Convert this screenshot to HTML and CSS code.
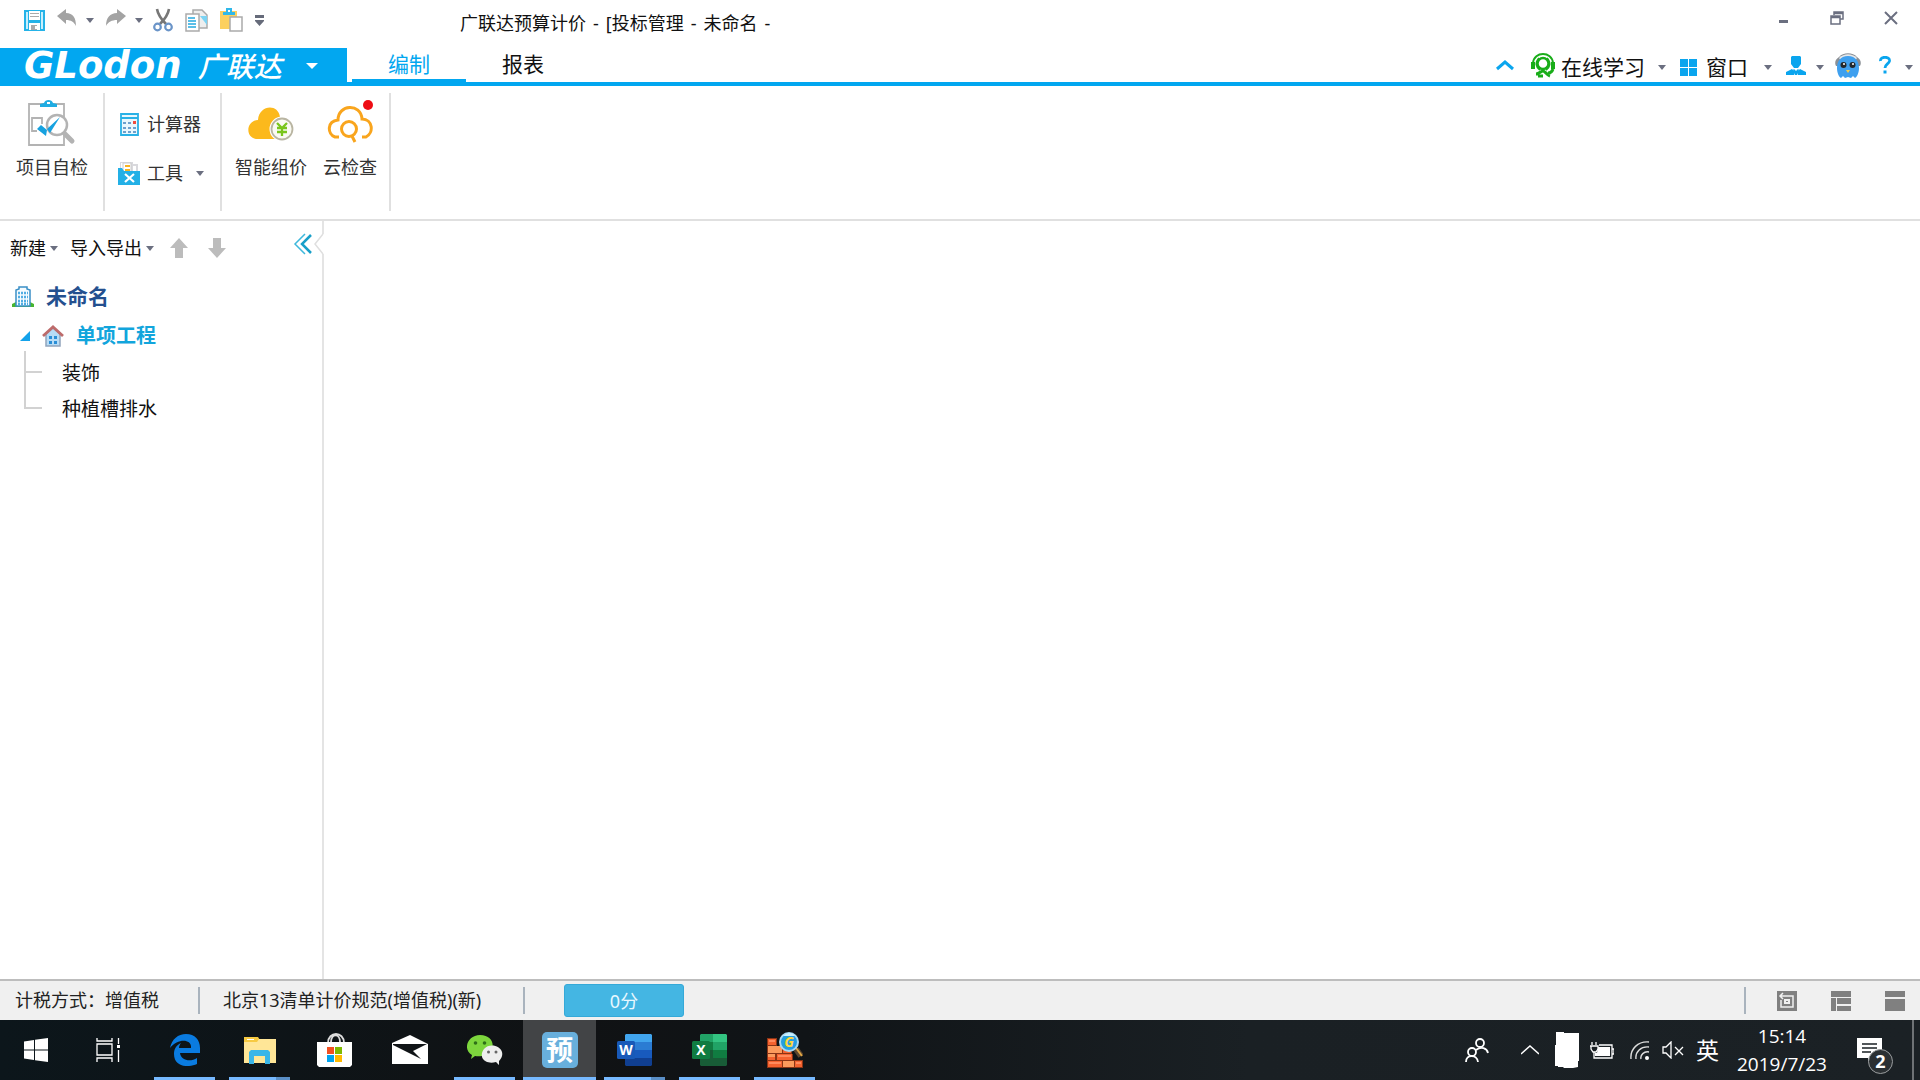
FILE: index.html
```
<!DOCTYPE html>
<html lang="zh-CN">
<head>
<meta charset="utf-8">
<title>广联达预算计价</title>
<link rel="stylesheet" href="styles.css">
</head>
<body>
<div class="app">
  <header class="titlebar">
    <div class="quick">
      <button class="quick-btn" aria-label="保存"><svg width="21" height="21" viewBox="0 0 21 21"><path fill="#25b3e8" d="M0 0h21v21H0z"/><path fill="#c9effc" d="M2 2h2v17H2zM17 2h2v17h-2z"/><path fill="#fff" d="M5 1h11v9H5zM5 13h11v7H5z"/><path fill="#aaa" d="M6 3h9v1H6zM6 6h9v1H6zM7 15h6v5H7z"/><path fill="#fff" d="M11 16h2v3h-2z"/></svg></button>
      <button class="quick-btn split" aria-label="撤销"><svg width="20" height="22" viewBox="0 0 20 22"><path fill="#a3a3a3" d="M0 7 9 0v4c7 0 10 5 10 13-2-4-5-6-10-6v4z"/></svg><i class="caret"></i></button>
      <button class="quick-btn split" aria-label="重做"><svg width="20" height="22" viewBox="0 0 20 22"><path fill="#a3a3a3" d="M20 7 11 0v4C4 4 0 9 0 17c2-4 6-6 11-6v4z"/></svg><i class="caret"></i></button>
      <button class="quick-btn" aria-label="剪切"><svg width="20" height="24" viewBox="0 0 20 24"><path fill="none" stroke="#777" stroke-width="2.6" d="M4 1c1 6 4 10 9 15M16 1c-1 6-4 10-9 15"/><g fill="#fff" stroke="#6a94c8" stroke-width="2.2"><circle cx="4.500" cy="19" r="3.300"/><circle cx="15.500" cy="19" r="3.300"/></g></svg></button>
      <button class="quick-btn" aria-label="复制"><svg width="23" height="23" viewBox="0 0 23 23"><path fill="#eee" stroke="#aaa" stroke-width="1.500" d="M8 1h9l5 5v13H8z"/><path fill="#7cd3f3" d="M15 7h7v9z"/><path fill="#fff" stroke="#aaa" stroke-width="1.500" d="M1 5h13v17H1z"/><path stroke="#25a9e0" stroke-width="1.500" d="M3 9h7M3 12h8M3 15h8M3 18h8"/></svg></button>
      <button class="quick-btn" aria-label="粘贴"><svg width="23" height="24" viewBox="0 0 23 24"><path fill="#fcd05f" d="M0 3h17v18H0z"/><path fill="#2fb8ea" d="M3 7V4h3V0h6v4h3v3z"/><path fill="#fff" d="M8 2h2v2H8z"/><path fill="#fff" stroke="#aaa" stroke-width="1.500" d="M10 9h12v14H10z"/></svg></button>
      <button class="quick-btn" aria-label="更多"><svg width="9" height="11" viewBox="0 0 9 11"><path fill="#666b7a" d="M0 0h9v3H0zM0 5h9v1L4.500 11 0 6z"/></svg></button>
    </div>
    <h1 class="doc-title"><span>广联达预算计价</span><span>-</span><span>[投标管理</span><span>-</span><span>未命名</span><span>-</span></h1>
    <div class="win-controls">
      <button aria-label="最小化"><svg width="14" height="14" viewBox="0 0 14 14"><path fill="#6b6f80" d="M3 9h9v3H3z"/></svg></button>
      <button aria-label="还原"><svg width="14" height="14" viewBox="0 0 14 14"><path fill="none" stroke="#6b6f80" stroke-width="1.500" d="M4 4V1h9v7h-3M1 5h9v8H1zM1 6.500h9M4 2.500h9"/></svg></button>
      <button aria-label="关闭"><svg width="14" height="14" viewBox="0 0 14 14"><path fill="none" stroke="#6b6f80" stroke-width="2" d="m1 1 12 12M13 1 1 13"/></svg></button>
    </div>
  </header>

  <nav class="menubar">
    <button class="brand"><span class="brand-en">GLodon</span><span class="brand-cn">广联达</span><i class="caret caret-light"></i></button>
    <button class="tab tab-active">编制</button>
    <button class="tab">报表</button>
    <div class="menu-tools">
      <button class="tool" aria-label="收起功能区"><svg width="18" height="14" viewBox="0 0 18 14"><path fill="none" stroke="#0aa5ee" stroke-width="3" d="m1 9 8-7 8 7"/></svg></button>
      <button class="tool tool-learn"><svg width="24" height="28" viewBox="0 0 24 28"><g fill="none" stroke="#19ad19"><path stroke-width="2" d="M2 10C3-2 21-2 22 10"/><path stroke-width="4" d="M2 9v7M22 9v7"/><circle cx="12" cy="10.500" r="5.500" stroke-width="2.500"/><path stroke-width="2" d="M8 5c-4 5-3 9 1 12M16 5c4 5 3 9-1 12"/><path stroke-width="3" d="M5 21c3 0 5-3 7-3s4 4 7 5M22 16c-1 3-3 4-5 4M7 23h5"/></g></svg><span>在线学习</span><i class="caret"></i></button>
      <button class="tool tool-window"><svg width="17" height="17" viewBox="0 0 17 17"><path fill="#0aa5ee" d="M0 0h8v8H0zM9 0h8v8H9zM0 9h8v8H0zM9 9h8v8H9z"/></svg><span>窗口</span><i class="caret"></i></button>
      <button class="tool tool-user" aria-label="用户"><svg width="20" height="23" viewBox="0 0 20 23"><path fill="#0aa5ee" d="M6 0h8l1 1v7l-3 4H8L5 8V1zM0 19v-3l6-3 3 3-1 3zM20 19v-3l-6-3-3 3 1 3z"/><path fill="#0aa5ee" d="m8 13 2 2 2-2 1 1-2 5H9l-2-5z"/></svg><i class="caret"></i></button>
      <button class="tool" aria-label="助手"><svg width="26" height="29" viewBox="0 0 26 29"><path fill="#8b9096" d="M1 13C-1 9 1 6 4 4c4-5 14-5 18 0 3 2 5 5 3 9z"/><path fill="#e4e7ea" d="M4 5c5-5 13-5 18 0l-2 3H6z"/><path fill="#3fa0ef" d="M13 3c8 0 11 6 11 12 0 5-2 9-4 10l-2-2-2 2-3-1-3 1-2-2-2 2c-2-1-4-5-4-10C2 9 5 3 13 3z"/><circle cx="8.500" cy="12" r="3" fill="#23282d"/><circle cx="17.500" cy="12" r="3" fill="#23282d"/><circle cx="9" cy="11" r="1" fill="#fff"/><circle cx="18" cy="11" r="1" fill="#fff"/><path fill="#f6cc4c" d="m11 17 2 3 2-3z"/></svg></button>
      <button class="tool tool-help" aria-label="帮助"><svg width="12" height="22" viewBox="0 0 12 22"><path fill="none" stroke="#0aa5ee" stroke-width="2.800" d="M1.500 5C1 0 11 0 10.500 5 10 8 6 8 6 12"/><path fill="#0aa5ee" d="M4.500 14.500h3v3h-3z"/></svg><i class="caret"></i></button>
    </div>
  </nav>

  <section class="ribbon">
    <div class="ribbon-group">
      <button class="big-btn"><svg width="48" height="46" viewBox="0 0 48 46"><path fill="#fff" stroke="#b3b3b3" stroke-width="1.800" d="M1 4h35v41H1z"/><path fill="#20ace2" d="M12 7V4l4-1c1-4 8-4 9 0l4 1v3z"/><path fill="#fff" d="M19 2h3v2h-3z"/><path fill="none" stroke="#b3b3b3" stroke-width="1.800" d="M14 24v-6H4v13h5"/><circle cx="29" cy="25" r="10" fill="#fff" stroke="#b3b3b3" stroke-width="2.500"/><path stroke="#b3b3b3" stroke-width="5" stroke-linecap="round" d="m37 34 7 7"/><path fill="#17a2e0" d="m9 29 4-4 6 5-1 6zM19 29 32 17 22 33z"/></svg><span>项目自检</span></button>
    </div>
    <div class="ribbon-group ribbon-stack">
      <button class="small-btn"><svg width="22" height="23" viewBox="0 0 22 23"><path fill="#e9f7fd" stroke="#28b1e6" stroke-width="1.800" d="M3 1h17v21H3z"/><path fill="#28b1e6" d="M3 4h17v2H3z"/><path stroke="#4384bd" stroke-width="1.500" stroke-dasharray="3 2" d="M5 10h13M5 15h13M5 19h13"/><path fill="#f04e3e" d="M15 8h3v3h-3z"/></svg><span>计算器</span></button>
      <button class="small-btn"><svg width="22" height="23" viewBox="0 0 22 23"><path fill="#d9d9dd" d="M2 0h13v2h5v8H2z"/><path fill="#fff" d="M3 1h2v8H3zM15 4h3v5h-3z"/><path fill="#fff" stroke="#ccc" d="M5 1h8v9H5z"/><path stroke="#f8b420" stroke-width="2" d="M7 4h5M7 8h5"/><path fill="#23b0e6" d="M0 6h4l2 3h16v14H0z"/><path stroke="#fff" stroke-width="2.200" d="m7 12 9 8M16 12l-9 8"/></svg><span>工具</span><i class="caret"></i></button>
    </div>
    <div class="ribbon-group ribbon-cloud">
      <button class="big-btn"><svg width="46" height="46" viewBox="0 0 46 46"><path fill="#fcb91c" d="M8 39C-3 37-2 21 10 20 11 5 30 3 32 17c8 1 11 7 9 13-2 6-5 9-10 9z"/><circle cx="34" cy="29" r="11" fill="#f5f3e9" stroke="#fff" stroke-width="3"/><circle cx="34" cy="29" r="10.500" fill="#fafaf2" stroke="#b9b5a2" stroke-width="1.800"/><path fill="none" stroke="#7ac51c" stroke-width="2.300" d="m29 23 5 5 5-5M34 28v8M29 28h10M29 32h10"/></svg><span>智能组价</span></button>
      <button class="big-btn"><svg width="46" height="46" viewBox="0 0 46 46"><path fill="none" stroke="#f9a51d" stroke-width="3" d="M12 37H8c-8-3-8-16 3-17C11 4 34 3 35 19c11 0 12 14 4 18h-4"/><circle cx="22" cy="29" r="7.500" fill="none" stroke="#f9a51d" stroke-width="3"/><path stroke="#f9a51d" stroke-width="3" d="m25 36 3 6"/><circle cx="41" cy="5" r="5" fill="#ee0d14"/></svg><span>云检查</span></button>
    </div>
  </section>

  <main class="workspace">
    <aside class="sidebar">
      <div class="side-tools">
        <button>新建<i class="caret"></i></button>
        <button>导入导出<i class="caret"></i></button>
        <button class="move" aria-label="上移"><svg width="18" height="20" viewBox="0 0 18 20"><path fill="#bcbcbc" d="m9 0 9 10h-5v10H5V10H0z"/></svg></button>
        <button class="move" aria-label="下移"><svg width="18" height="20" viewBox="0 0 18 20"><path fill="#bcbcbc" d="m9 20 9-10h-5V0H5v10H0z"/></svg></button>
      </div>
      <button class="collapse" aria-label="收起"><svg width="32" height="32" viewBox="0 0 32 32"><path fill="#fff" d="M22 16 31 6h1v20h-1z"/><path fill="none" stroke="#dfdfdf" stroke-width="1.500" d="m31 6-8 10 8 10"/><path fill="none" stroke="#3eb8dc" stroke-width="1.500" d="m13 6-10 10 10 10"/><path fill="none" stroke="#189fc9" stroke-width="2.500" d="m19 7-9 9 9 9"/></svg></button>
      <ul class="tree">
        <li>
          <a class="node root" href="#"><svg width="22" height="21" viewBox="0 0 22 21"><path fill="#48b52f" d="M0 21v-3l4-2h14l4 2v3z"/><path fill="#f6fcff" stroke="#3a8fc6" stroke-width="1.500" d="M4 20V4l3-1V1h8v2l3 1v16z"/><path stroke="#51ade3" stroke-width="2.500" stroke-dasharray="2 1" d="M6 7h10M6 11h10M6 15h10M6 18h10"/></svg>未命名</a>
          <ul>
            <li>
              <a class="node group" href="#"><svg width="10" height="10" viewBox="0 0 10 10"><path fill="#14a2ea" d="M10 0v10H0z"/></svg><svg width="22" height="22" viewBox="0 0 22 22"><path fill="#b7dcf6" stroke="#91a4bc" stroke-width="1.500" d="M4 9 11 3l7 6v12H4z"/><path fill="none" stroke="#bd6b6b" stroke-width="2.800" d="M1 11 11 2l10 9"/><path fill="#2a8ed6" d="M7 11h3v3H7zM12 11h3v3h-3zM7 16h3v3H7zM12 16h3v3h-3z"/></svg>单项工程</a>
              <ul class="leaves">
                <li><a href="#">装饰</a></li>
                <li><a href="#">种植槽排水</a></li>
              </ul>
            </li>
          </ul>
        </li>
      </ul>
    </aside>
    <div class="canvas"></div>
  </main>

  <footer class="statusbar">
    <div class="status-item tax">计税方式：增值税</div>
    <div class="status-item norm">北京13清单计价规范(增值税)(新)</div>
    <button class="score">0分</button>
    <div class="views">
      <button aria-label="视图一"><svg width="20" height="20" viewBox="0 0 20 20"><path fill="#808080" d="M0 0h20v20H0z"/><path fill="none" stroke="#f0f0f0" stroke-width="1.500" d="M3 5h13v11H4V9M6 2 3 5l3 3"/><path fill="none" stroke="#f0f0f0" stroke-width="2" d="M8 9h4v3H8z"/></svg></button>
      <button aria-label="视图二"><svg width="20" height="20" viewBox="0 0 20 20"><path fill="#808080" d="M0 0h20v6H0zM0 7h5v13H0zM6 7h14v6H6zM6 15h14v5H6z"/></svg></button>
      <button aria-label="视图三"><svg width="20" height="20" viewBox="0 0 20 20"><path fill="#808080" d="M0 0h20v6H0zM0 8h20v12H0z"/></svg></button>
    </div>
  </footer>
</div>

<footer class="taskbar">
  <button class="sys" aria-label="开始"><svg width="24" height="24" viewBox="0 0 24 24"><path fill="#fff" d="M0 3.500 10 2v9.500H0zM11 1.800 24 0v11.500H11zM0 12.500h10V22L0 20.500zM11 12.500h13V24l-13-1.800z"/></svg></button>
  <button class="sys" aria-label="任务视图"><svg width="25" height="24" viewBox="0 0 25 24"><path fill="none" stroke="#fff" stroke-width="1.300" d="M1 6h15v11H1zM1 0v3h15V0M1 24v-4h15v4M22.500 0v6M22.500 12v12"/><path fill="#fff" d="M21 7h3v3h-3z"/></svg></button>
  <div class="apps">
    <button class="app-btn open" aria-label="Edge"><svg width="30" height="32" viewBox="0 0 30 32"><path fill="#0a7be0" d="M0 14C2 5 8 0 16 0c9 0 14 6 14 14v5H10c1 8 11 9 17 5v6C18 34 4 33 4 20c0-6 3-9 7-11-1 1-2 3-2 5h12C22 5 8 4 0 14z"/></svg></button>
    <button class="app-btn open multi" aria-label="文件资源管理器"><svg width="32" height="27" viewBox="0 0 32 27"><path fill="#f7ca42" d="M0 0h14l2 3h16v7H0z"/><path fill="#ffe697" d="M0 5h13l2-3h17v24H0z"/><path fill="#fff" d="M3 2h7v1H3z"/><path fill="#3ab6e8" d="M5 27V15l2-2h17l2 2v12h-5v-8H10v8z"/></svg></button>
    <button class="app-btn" aria-label="应用商店"><svg width="35" height="34" viewBox="0 0 35 34"><path fill="none" stroke="#ddd" stroke-width="1.800" d="M11 10C11-2 27-2 27 10M14 9c0-9 9-9 9 0"/><path fill="#fff" d="M0 9h35v23l-2 2H2l-2-2z"/><path fill="#f25022" d="M10 14h7v7h-7z"/><path fill="#7fba00" d="M18 14h7v7h-7z"/><path fill="#00a4ef" d="M10 22h7v7h-7z"/><path fill="#ffb900" d="M18 22h7v7h-7z"/></svg></button>
    <button class="app-btn" aria-label="邮件"><svg width="36" height="30" viewBox="0 0 36 30"><path fill="#fff" d="M0 8 18 0l18 9v20H0z"/><path fill="#101417" d="M1 9h34l-14 7 8 8L1 10z"/></svg></button>
    <button class="app-btn open" aria-label="微信"><svg width="36" height="30" viewBox="0 0 36 30"><path fill="#7dd63d" d="m4 24 1-4C-5 14 1 0 13 0c12 0 15 10 11 15-4 6-11 7-16 6z"/><path fill="#eee" d="M29 27C18 30 11 22 17 14c5-6 16-4 18 3 1 4-1 7-3 9v4z"/><g fill="#2f7019"><circle cx="8.500" cy="8" r="1.800"/><circle cx="17.500" cy="8" r="1.800"/></g><g fill="#666"><circle cx="21.500" cy="17" r="1.500"/><circle cx="29" cy="17" r="1.500"/></g></svg></button>
    <button class="app-btn open current"><span class="yu">预</span></button>
    <button class="app-btn open multi" aria-label="Word"><svg width="36" height="32" viewBox="0 0 36 32"><path fill="#41a5ee" d="M9 0h25l1 1v7H8V1z"/><path fill="#2b7cd3" d="M8 8h27v8H8z"/><path fill="#185abd" d="M8 16h27v8H8z"/><path fill="#103f91" d="M8 24h27v7l-1 1H9l-1-1z"/><rect y="7" width="18" height="18" rx="1.500" fill="#1859b8"/><text x="9" y="21" class="office-letter">W</text></svg></button>
    <button class="app-btn open" aria-label="Excel"><svg width="36" height="32" viewBox="0 0 36 32"><path fill="#21a366" d="M9 0h13v16H8V1z"/><path fill="#33c481" d="M21 0h13l1 1v7H21z"/><path fill="#21a366" d="M21 8h14v8H21z"/><path fill="#107c41" d="M8 8h13v8H8zM21 16h14v8H21z"/><path fill="#185c37" d="M8 16h13v8h14v7l-1 1H9l-1-1z"/><rect y="7" width="18" height="18" rx="1.500" fill="#107c41"/><text x="9" y="21" class="office-letter">X</text></svg></button>
    <button class="app-btn open" aria-label="广联达工具"><svg width="36" height="36" viewBox="0 0 36 36"><path fill="#8a3416" d="M0 6h10v8h15v8h1v6h10v8H0z"/><path fill="#f4622f" d="M1 7h8v6H1zM1 22h7v6H1zM10 22h15v6H10zM1 29h14v6H1z"/><path fill="#fb9a5c" d="M1 14h14v7H1zM16 29h11v6H16zM1 22h7v3H1z"/><path fill="#f4622f" d="M16 15h8v6h-8zM28 29h7v6h-7z"/><path fill="#ff8a5c" d="M2 8h6v2H2zM11 23h13v2H11zM2 30h12v2H2zM29 30h5v2h-5z"/><path stroke="#5b4630" stroke-width="6" d="m29 17 5 7"/><path stroke="#e0a543" stroke-width="2" d="m29 16 6 8"/><circle cx="22" cy="10" r="9" fill="#249fdf" stroke="#a9d8f1" stroke-width="2"/><path fill="#c8efff" d="M16 4c4-4 9-4 12 0z"/><text x="22" y="15" class="g-letter">G</text></svg></button>
  </div>
  <div class="tray">
    <button class="people" aria-label="人脉"><svg width="24" height="24" viewBox="0 0 24 24"><g fill="none" stroke="#fff" stroke-width="1.800"><circle cx="15" cy="5" r="4"/><circle cx="7" cy="14" r="4"/><path d="M1 24c0-8 11-8 12 0M11 12c5-4 11-2 12 3"/></g></svg></button>
    <button class="tray-up" aria-label="显示隐藏的图标"><svg width="18" height="10" viewBox="0 0 18 10"><path fill="none" stroke="#fff" stroke-width="1.500" d="m0 9 9-8 9 8"/></svg></button>
    <svg width="24" height="36" viewBox="0 0 24 36"><path fill="#fff" d="M1 0h8v1h15v28h-1v6l-5 1H9l-1-1H3v-1H0V13h1z"/></svg>
    <svg class="battery" width="24" height="17" viewBox="0 0 24 17"><path fill="#fff" d="M8 5h12v9H5v-3h2z"/><path fill="none" stroke="#fff" stroke-width="1.300" d="M9 3h13v13H4v-5M22 7h2v5h-2M2 0v3M6 0v3M0 4h8v3l-2 3H3L1 7V4M4 10v6"/></svg>
    <svg class="wifi" width="20" height="19" viewBox="0 0 20 19"><g fill="none" stroke="#ddd" stroke-width="1.400"><path d="M1 18C0 8 8 0 19 1M6 18C5 11 11 5 19 6M11 18c-1-4 3-8 8-7"/></g><circle cx="17" cy="17" r="2" fill="#fff"/></svg>
    <svg class="volume" width="22" height="18" viewBox="0 0 22 18"><path fill="none" stroke="#fff" stroke-width="1.300" d="M1 6h3l5-5v16l-5-5H1zM13 6l8 8M21 6l-8 8"/></svg>
    <button class="ime">英</button>
    <time class="clock"><span>15:14</span><span>2019/7/23</span></time>
    <button class="notice" aria-label="通知"><svg width="38" height="38" viewBox="0 0 38 38"><path fill="#fff" d="M0 0h25v20H14l-3 4v-4H0z"/><path stroke="#1a2024" stroke-width="1.500" d="M5 6h15M5 10h15M5 14h9"/></svg><span class="badge">2</span></button>
    <button class="desktop" aria-label="显示桌面"></button>
  </div>
</footer>
</body>
</html>
```
FILE: styles.css
```
* { box-sizing: border-box; }

body {
  margin: 0;
  min-height: 100vh;
  display: flex;
  flex-direction: column;
  background: #fff;
  color: #111;
  font: 18px/24px "Noto Sans", "Noto Sans CJK SC", sans-serif;
}

button {
  display: flex;
  align-items: center;
  padding: 0;
  border: 0;
  background: none;
  color: inherit;
  font: inherit;
  white-space: nowrap;
}

svg { display: block; flex: none; }
a { color: inherit; text-decoration: none; }
ul { margin: 0; padding: 0; list-style: none; }

.caret {
  flex: none;
  border: 4px solid transparent;
  border-top: 5px solid #6b6f80;
  border-bottom: 0;
}
.caret-light { border-width: 6px; border-top-color: #fff; border-bottom: 0; }

.app { flex: 1; display: flex; flex-direction: column; }

/* title bar */
.titlebar { display: flex; height: 48px; }
.quick {
  display: flex;
  align-items: center;
  gap: 12px;
  width: 460px;
  height: 40px;
  padding-left: 24px;
}
.split { gap: 9px; }
.split + .split { margin-right: -2px; }
.doc-title {
  display: flex;
  gap: 7px;
  margin: 0;
  padding-top: 11px;
  font-size: 18px;
  font-weight: 400;
  white-space: nowrap;
}
.win-controls {
  display: flex;
  gap: 40px;
  margin-left: auto;
  padding-right: 22px;
  height: 35px;
}

/* menu bar */
.menubar {
  display: flex;
  height: 38px;
  border-bottom: 4px solid #02a7f0;
  font-size: 21px;
  line-height: 30px;
}
.brand {
  width: 347px;
  margin-right: 5px;
  padding: 2px 0 0 24px;
  background: #02a7f0;
  color: #fff;
  font-style: italic;
  font-weight: 700;
}
.brand-en { font-family: "DejaVu Sans", sans-serif; font-size: 37px; line-height: 32px; }
.brand-cn { margin-left: 16px; font-size: 28px; font-weight: 500; }
.brand .caret { margin-left: 24px; }
.tab { justify-content: center; width: 114px; border-bottom: 3px solid transparent; }
.tab-active { border-bottom-color: #02a7f0; color: #02a7f0; }
.menu-tools { display: flex; gap: 11px; margin-left: auto; padding: 4px 7px 0 0; }
.tool-learn { gap: 6px; padding-left: 6px; }
.tool-learn .caret, .tool-window .caret { margin-left: 7px; }
.tool-learn, .tool-window { margin-right: 3px; }
.tool-window { gap: 9px; }
.tool-user { gap: 10px; }
.tool-help { gap: 14px; padding-left: 7px; }

/* ribbon */
.ribbon {
  display: flex;
  height: 135px;
  padding: 7px 0 8px;
  border-bottom: 2px solid #e0e0e0;
  color: #333;
}
.ribbon-group { display: flex; padding: 7px 15px 0 16px; border-right: 2px solid #e0e0e0; }
.big-btn { flex-direction: column; justify-content: flex-start; gap: 9px; }
.ribbon-stack { flex-direction: column; gap: 25px; padding: 19px 16px 0 13px; }
.small-btn { gap: 7px; }
.small-btn .caret { margin-left: 6px; }
.ribbon-cloud { gap: 16px; padding: 7px 12px 0 13px; }

/* project panel */
.workspace { flex: 1; display: flex; }
.sidebar { position: relative; width: 324px; border-right: 2px solid #e4e4e4; }
.side-tools { display: flex; gap: 12px; padding: 15px 0 0 10px; }
.side-tools button { gap: 4px; }
.side-tools .move { margin-left: 4px; }
.side-tools .move + .move { margin-left: 8px; }
.collapse { position: absolute; top: 7px; right: -2px; }
.tree { padding-top: 22px; font-size: 20px; line-height: 28px; }
.node { display: flex; align-items: center; font-weight: 700; }
.root { gap: 12px; padding: 0 0 12px 12px; color: #24508f; font-size: 21px; }
.group { gap: 12px; padding-left: 20px; color: #12a5dc; }
.leaves {
  display: grid;
  gap: 8px;
  margin-top: 9px;
  padding-left: 24px;
  font-size: 19px;
}
.leaves li { position: relative; padding-left: 38px; }
.leaves li::before {
  content: "";
  position: absolute;
  left: 0;
  bottom: 14px;
  width: 16px;
  height: 36px;
  border: solid #d2d2d2;
  border-width: 0 0 2px 2px;
}
.leaves li:first-child::before { height: 20px; }
.canvas { flex: 1; }

/* status bar */
.statusbar {
  display: flex;
  align-items: center;
  height: 41px;
  border-top: 2px solid #bdbdbd;
  background: #f0f0f0;
  color: #222;
}
.status-item { height: 27px; border-right: 2px solid #a9b3bd; line-height: 27px; white-space: nowrap; }
.tax { width: 200px; padding-left: 15px; }
.norm { width: 325px; padding-left: 23px; }
.score {
  justify-content: center;
  width: 120px;
  height: 33px;
  margin-left: 39px;
  border: 1px solid #35a9d8;
  border-radius: 3px;
  background: #44b6e3;
  color: #e8f8ff;
}
.views {
  display: flex;
  gap: 34px;
  height: 27px;
  margin-left: auto;
  padding: 0 15px 0 31px;
  border-left: 2px solid #a9b3bd;
}

/* taskbar */
.taskbar {
  display: flex;
  height: 60px;
  background: linear-gradient(90deg, #0c161b, #101214 30%, #101417 42%, #1a2024 65%, #1b2125);
  color: #fff;
}
.sys { justify-content: center; width: 72px; }
.apps { display: flex; gap: 2px; margin-left: 4px; }
.app-btn { position: relative; justify-content: center; width: 73px; }
.open::after {
  content: "";
  position: absolute;
  left: 6px;
  right: 6px;
  bottom: 0;
  height: 3px;
  background: #76b9ff;
}
.multi::after { background: linear-gradient(90deg, #76b9ff 47px, #5a8fc7 47px); }
.current { background: #424446; }
.current::after { left: 0; right: 0; }
.yu {
  width: 36px;
  height: 36px;
  border-radius: 5px;
  background: #68afdc;
  font-size: 27px;
  font-weight: 700;
  line-height: 36px;
}
.office-letter, .g-letter { fill: #fff; font: 700 14px "Open Sans", sans-serif; text-anchor: middle; }
.g-letter { fill: #ffd83a; font-style: italic; }
.tray { display: flex; align-items: center; margin-left: auto; }
.people { margin-right: 32px; }
.tray-up { margin-right: 16px; }
.battery { margin-left: 11px; }
.wifi { margin-left: 16px; }
.volume { margin-left: 12px; }
.ime { margin-left: 12px; font-size: 23px; }
.clock {
  display: flex;
  flex-direction: column;
  align-items: center;
  width: 94px;
  margin: 0 28px 0 16px;
  font: 19px/28px "Open Sans", sans-serif;
}
.notice { position: relative; margin: 14px 17px 0 0; }
.badge {
  position: absolute;
  left: 11px;
  top: 11px;
  width: 25px;
  height: 25px;
  border: 1px solid #9a9d9f;
  border-radius: 50%;
  background: #2b3033;
  font: 700 18px/23px "Open Sans", sans-serif;
  text-align: center;
}
.desktop { width: 8px; height: 60px; border-left: 2px solid #6e7275; }
```
